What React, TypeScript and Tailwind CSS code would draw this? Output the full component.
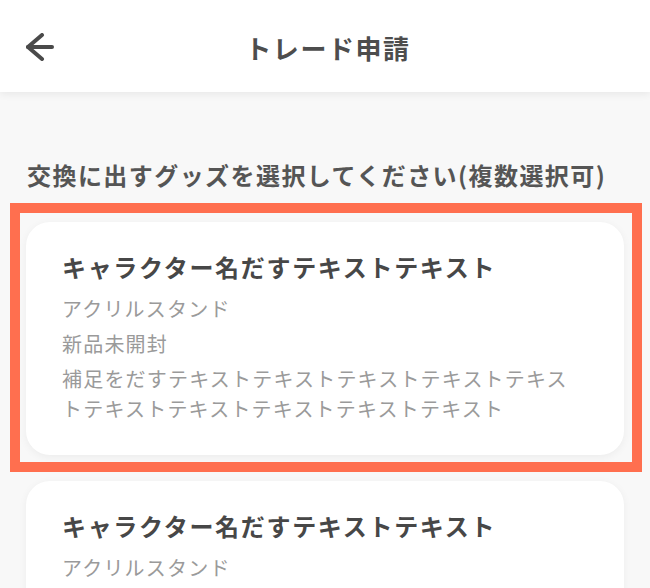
import React from 'react';

type Goods = {
    id: number;
    name: string;
    category: string;
    condition: string;
    note: string;
};

const goodsList: Goods[] = [
    {
        id: 1,
        name: 'キャラクター名だすテキストテキスト',
        category: 'アクリルスタンド',
        condition: '新品未開封',
        note: '補足をだすテキストテキストテキストテキストテキストテキストテキストテキストテキストテキスト',
    },
    {
        id: 2,
        name: 'キャラクター名だすテキストテキスト',
        category: 'アクリルスタンド',
        condition: '新品未開封',
        note: '補足をだすテキストテキストテキストテキストテキストテキストテキストテキストテキストテキスト',
    },
];

const BackArrow: React.FC = () => (
    <svg width="28" height="28" viewBox="0 0 28 28" fill="none" stroke="#4a4a4a" strokeWidth={4} strokeLinecap="round" strokeLinejoin="round">
        <path d="M16 2 2 14l14 12" />
        <path d="M2 14h24" />
    </svg>
);

const GoodsCard: React.FC<{ goods: Goods; selected: boolean }> = ({ goods, selected }) => (
    <div className="relative">
        {/* Selected highlight */}
        {selected && (
            <div className="absolute top-[-19px] bottom-[-17px] left-[-16px] right-[-18px] border-[10px] border-[#ff6f4f] pointer-events-none" />
        )}
        <div className="relative bg-white rounded-[24px] shadow-[0_2px_8px_rgba(0,0,0,0.05)] pt-[30px] pb-[31px] pl-[36px] pr-[44px]">
            <p className="text-[24px] leading-[30px] font-bold text-[#474747] tracking-[0.07em] mb-[12px]">
                {goods.name}
            </p>
            <div className="flex flex-col gap-[5px] text-[20px] leading-[30px] text-[#9a9a9a] tracking-[0.06em]">
                <p>{goods.category}</p>
                <p>{goods.condition}</p>
                <p>{goods.note}</p>
            </div>
        </div>
    </div>
);

const App: React.FC = () => {
    return (
        <div className="min-h-screen bg-[#f8f8f8] font-['Noto_Sans_CJK_JP','Noto_Sans',sans-serif]">
            {/* Header */}
            <header className="h-[92px] bg-white shadow-[0_2px_8px_rgba(0,0,0,0.07)] flex items-center px-[26px]">
                <button className="w-[28px] h-[28px] flex items-center justify-center mt-[2px]">
                    <BackArrow />
                </button>
                <h1 className="flex-1 text-center text-[26px] font-bold text-[#4d4d4d] tracking-[0.06em] mt-[2px] pl-[6px]">
                    トレード申請
                </h1>
                <div className="w-[28px]" />
            </header>

            <main className="pt-[67px] pb-[40px]">
                <p className="px-[27px] text-[24px] leading-[32px] font-bold text-[#555555] tracking-[0.06em] mb-[31px]">
                    交換に出すグッズを選択してください(複数選択可)
                </p>
                <div className="flex flex-col gap-[26px] px-[26px]">
                    {goodsList.map((g, i) => (
                        <GoodsCard key={g.id} goods={g} selected={i === 0} />
                    ))}
                </div>
            </main>
        </div>
    );
};

export default App;
